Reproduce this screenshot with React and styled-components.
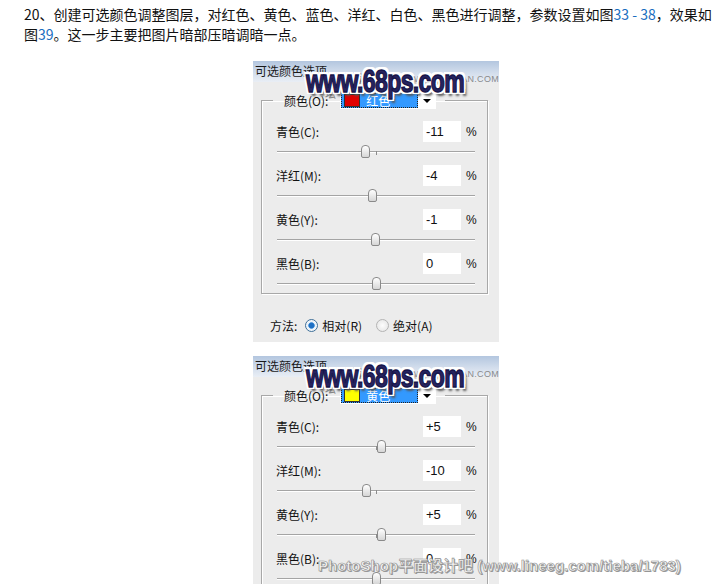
import React from 'react';
import styled, { createGlobalStyle } from 'styled-components';

const Global = createGlobalStyle`
  html, body { margin: 0; padding: 0; background: #fff; }
  body { font-family: "Noto Sans CJK SC", "Liberation Sans", sans-serif; }
`;

const Page = styled.div`
  position: relative;
  width: 728px;
  height: 584px;
  overflow: hidden;
`;

const Intro = styled.p`
  margin: 0;
  padding: 4px 0 0 24px;
  font-size: 14px;
  line-height: 20px;
  color: #111;
  white-space: nowrap;
  a { color: #1a6ec0; text-decoration: none; }
`;

const Shots = styled.div`
  display: flex;
  flex-direction: column;
  gap: 14px;
  padding-left: 253px;
  margin-top: 17px;
`;

const Dialog = styled.div`
  position: relative;
  width: 246px;
  background: #ececec;
  font-size: 12px;
  color: #111;
`;

const TitleBar = styled.div`
  height: 21px;
  line-height: 20px;
  padding-left: 2px;
  font-size: 12px;
  color: #1a1a1a;
  background: linear-gradient(to bottom, #b3c6df 0%, #d2ddec 55%, #e9eef5 100%);
`;

const SiteMark = styled.div`
  position: absolute;
  left: 53px;
  top: 2px;
  font-family: "Liberation Sans", Arial, sans-serif;
  font-weight: bold;
  font-size: 23px;
  letter-spacing: -0.6px;
  color: #27245f;
  transform: scaleY(1.36);
  transform-origin: left top;
  -webkit-text-stroke: 1px #17154a;
  text-shadow: 2px 0 0 #fff, -2px 0 0 #fff, 0 2px 0 #fff, 0 -2px 0 #fff,
    2px 2px 0 #fff, -2px -2px 0 #fff, 2px -2px 0 #fff, -2px 2px 0 #fff,
    3px 3px 2px #555;
  pointer-events: none;
`;

const ForumMark = styled.div`
  position: absolute;
  left: 72px;
  top: 8px;
  display: flex;
  align-items: baseline;
  gap: 6px;
  color: #8a8a8a;
  font-size: 11px;
  span { font-family: "Liberation Sans", Arial, sans-serif; font-size: 9px; letter-spacing: 0.3px; }
`;

const Group = styled.fieldset`
  margin: 10px 11px 0 8px;
  padding: 12px 12px 4px 14px;
  min-width: 0;
  border: 1px solid #a8a8a8;
  box-shadow: inset 1px 1px 0 #fff, 1px 1px 0 #fff;
`;

const Legend = styled.legend`
  display: flex;
  align-items: center;
  gap: 12px;
  margin-left: -3px;
  padding: 0 9px 0 11px;
  font-size: 12px;
`;

const Select = styled.div`
  display: flex;
  width: 96px;
  height: 17px;
  background: #fff;
  box-sizing: border-box;
  border: 1px solid #fff;
`;

const SelectValue = styled.div`
  flex: 1;
  display: flex;
  align-items: center;
  gap: 6px;
  padding-left: 3px;
  background: #3399ff;
  outline: 1px dotted #222;
  outline-offset: -1px;
  color: #fff;
  font-size: 12px;
`;

const Swatch = styled.span`
  width: 14px;
  height: 11px;
  background: ${p => p.color};
  border: 1px solid #333;
`;

const Arrow = styled.div`
  width: 17px;
  display: flex;
  align-items: center;
  justify-content: center;
  &::after {
    content: "";
    border-left: 4px solid transparent;
    border-right: 4px solid transparent;
    border-top: 4px solid #000;
  }
`;

const Rows = styled.div`
  display: flex;
  flex-direction: column;
  gap: 8px;
`;

const Line = styled.div`
  display: grid;
  grid-template-columns: 1fr 38px 14px;
  align-items: center;
  height: 21px;
`;

const Field = styled.div`
  height: 21px;
  background: #fff;
  line-height: 21px;
  padding-left: 3px;
  font-family: "Liberation Sans", Arial, sans-serif;
  font-size: 13px;
`;

const Percent = styled.span`
  padding-left: 5px;
  font-family: "Liberation Sans", Arial, sans-serif;
  font-size: 12px;
`;

const Slider = styled.div`
  position: relative;
  height: 12px;
  margin-top: 3px;
`;

const Track = styled.div`
  position: absolute;
  top: 6px;
  left: 1px;
  right: 0;
  height: 1px;
  background: #a4a4a4;
  box-shadow: 0 1px 0 #fff;
`;

const Tick = styled.div`
  position: absolute;
  top: 6px;
  left: 50%;
  width: 1px;
  height: 4px;
  background: #8c8c8c;
`;

const Thumb = styled.div`
  position: absolute;
  top: 0;
  width: 7px;
  height: 11px;
  margin-left: -4px;
  border: 1px solid #8a8a8a;
  border-radius: 4px 4px 2px 2px;
  background: linear-gradient(to bottom, #fff, #d6d6d6);
`;

const Method = styled.div`
  display: flex;
  align-items: center;
  height: 16px;
  margin: 23px 0 0 17px;
  padding-bottom: 9px;
  font-size: 12px;
`;

const Radio = styled.span`
  width: 11px;
  height: 11px;
  margin: 0 4px 0 ${p => p.gap}px;
  border-radius: 50%;
  border: 1px solid ${p => (p.checked ? '#3f6f98' : '#b4b4b4')};
  background: ${p =>
    p.checked
      ? 'radial-gradient(circle, #1d6fc4 0 2.5px, #5aa0e0 3px, #e8f0f8 3.6px, #fff 100%)'
      : 'radial-gradient(circle, #fdfdfd 0, #e2e2e2 100%)'};
`;

const Credit = styled.div`
  position: absolute;
  left: 318px;
  top: 554px;
  font-family: "Liberation Sans", "Noto Sans CJK SC", sans-serif;
  font-weight: bold;
  font-size: 15px;
  color: #f6f6f6;
  -webkit-text-stroke: 0.6px #8f8f8f;
  text-shadow: 1px 1px 0 #999;
  white-space: nowrap;
  pointer-events: none;
`;

const labels = ['青色(C):', '洋红(M):', '黄色(Y):', '黑色(B):'];

const shots = [
  { swatch: '#e00000', name: '红色', values: ['-11', '-4', '-1', '0'] },
  { swatch: '#ffff00', name: '黄色', values: ['+5', '-10', '+5', '0'] },
];

const Shot = ({ swatch, name, values }) => (
  <Dialog>
    <TitleBar>可选颜色选项</TitleBar>
    <ForumMark>思缘设计论坛<span>WWW.MISSYUAN.COM</span></ForumMark>
    <SiteMark>www.68ps.com</SiteMark>
    <Group>
      <Legend>
        颜色(O):
        <Select>
          <SelectValue>
            <Swatch color={swatch} />
            {name}
          </SelectValue>
          <Arrow />
        </Select>
      </Legend>
      <Rows>
        {labels.map((label, i) => (
          <div key={label}>
            <Line>
              <span>{label}</span>
              <Field>{values[i]}</Field>
              <Percent>%</Percent>
            </Line>
            <Slider>
              <Track />
              <Tick />
              <Thumb style={{ left: `calc(50% + ${parseInt(values[i], 10)}px)` }} />
            </Slider>
          </div>
        ))}
      </Rows>
    </Group>
    <Method>
      方法:
      <Radio checked gap={8} />相对(R)
      <Radio gap={14} />绝对(A)
    </Method>
  </Dialog>
);

export default function App() {
  return (
    <Page>
      <Global />
      <Intro>
        20、创建可选颜色调整图层，对红色、黄色、蓝色、洋红、白色、黑色进行调整，参数设置如图<a>33 - 38</a>，效果如
        <br />
        图<a>39</a>。这一步主要把图片暗部压暗调暗一点。
      </Intro>
      <Shots>
        {shots.map(s => (
          <Shot key={s.name} {...s} />
        ))}
      </Shots>
      <Credit>PhotoShop平面设计吧 (www.lineeg.com/tieba/1783)</Credit>
    </Page>
  );
}
